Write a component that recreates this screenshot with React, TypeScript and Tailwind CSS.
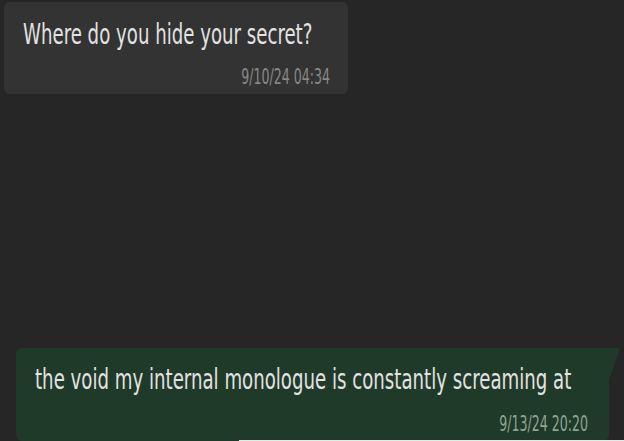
import React from 'react';

function Bubble({ text, time, mine }: { text: string; time: string; mine?: boolean }) {
  return (
    <div
      className={
        mine
          ? 'relative ml-[16px] w-[593px] h-[93px] rounded-l-md rounded-br-md bg-[#1f3a29] pl-[19px] pr-[21px] pt-[17px]'
          : 'ml-[4px] mt-[2px] w-[344px] h-[92px] rounded-md bg-[#333333] pl-[19px] pr-[18px] pt-[18px]'
      }
    >
      {mine && (
        <svg className="absolute top-0 right-[-11px]" width="12" height="35" viewBox="0 0 12 35">
          <polygon points="0,0 12,0 0,35" fill="#1f3a29" />
        </svg>
      )}
      <p className="origin-top-left scale-y-[1.4] text-[20.2px] leading-[20px] text-[#e2e2e2] whitespace-nowrap [font-stretch:condensed]">
        {text}
      </p>
      <p
        className={
          'origin-top-right scale-y-[1.55] text-right text-[14px] leading-[14px] whitespace-nowrap [font-stretch:condensed] ' +
          (mine ? 'mt-[27px] text-[#8ea394]' : 'mt-[25px] text-[#878787]')
        }
      >
        {time}
      </p>
    </div>
  );
}

export default function App() {
  return (
    <div
      className="flex h-[441px] w-[624px] flex-col justify-between overflow-hidden bg-[#262626]"
      style={{ fontFamily: '"DejaVu Sans", sans-serif' }}
    >
      <Bubble text="Where do you hide your secret?" time="9/10/24 04:34" />
      <div className="relative">
        <Bubble text="the void my internal monologue is constantly screaming at" time="9/13/24 20:20" mine />
        <div className="absolute bottom-0 left-[239px] right-0 h-px bg-[#e8e8e8]" />
      </div>
    </div>
  );
}
